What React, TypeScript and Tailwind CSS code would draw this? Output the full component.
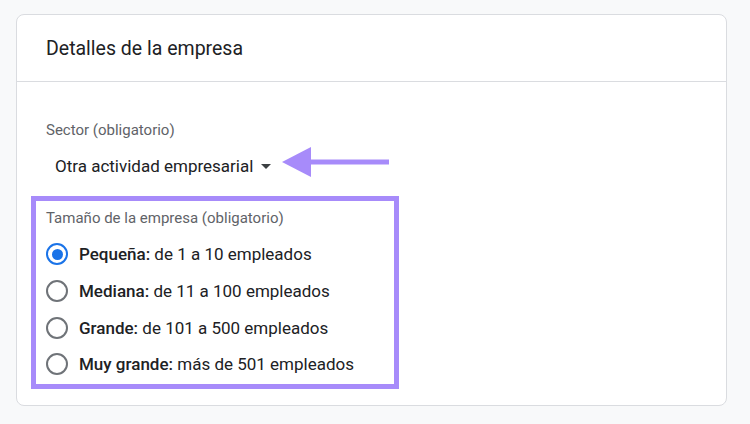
import { useState } from "react";

const sizes = [
  { id: "s", name: "Pequeña", desc: "de 1 a 10 empleados" },
  { id: "m", name: "Mediana", desc: "de 11 a 100 empleados" },
  { id: "l", name: "Grande", desc: "de 101 a 500 empleados" },
  { id: "xl", name: "Muy grande", desc: "más de 501 empleados" },
];

function Radio({ checked }: { checked: boolean }) {
  return (
    <span
      className={
        checked
          ? "flex h-[22px] w-[22px] shrink-0 items-center justify-center rounded-full border-[2.5px] border-[#1a73e8]"
          : "flex h-[22px] w-[22px] shrink-0 items-center justify-center rounded-full border-[2.5px] border-[#6f7378]"
      }
    >
      {checked && <span className="h-[11px] w-[11px] rounded-full bg-[#1a73e8]" />}
    </span>
  );
}

const App = () => {
  const [size, setSize] = useState("s");

  return (
    <div className="min-h-[424px] w-full bg-[#f8f9fa] pt-[14px] pl-[16px] font-['Roboto',sans-serif]">
      <div className="w-[711px] h-[392px] rounded-[8px] border border-[#dadce0] bg-white">
        {/* header */}
        <div className="flex h-[67px] items-center border-b border-[#dadce0] pl-[29px] pt-[1px]">
          <h2 className="text-[19.5px] leading-[24px] text-[#202124]">Detalles de la empresa</h2>
        </div>

        <div className="pl-[29px] pt-[40px]">
          <p className="text-[15px] leading-[16px] text-[#5f6368]">Sector (obligatorio)</p>

          <div className="relative mt-[16px] flex h-[24px] items-center pl-[9px]">
            <span className="text-[17px] leading-[24px] text-[#202124]">Otra actividad empresarial</span>
            <svg className="ml-[8px]" width="10" height="5" viewBox="0 0 10 5">
              <path d="M0 0 L10 0 L5 5 Z" fill="#3c4043" />
            </svg>
            {/* annotation arrow */}
            <svg
              className="absolute left-[236px] top-[-7px]"
              width="108"
              height="30"
              viewBox="0 0 108 30"
            >
              <path d="M0 15 L29 0 L29 30 Z" fill="#a78bfa" />
              <rect x="28" y="12.5" width="79" height="5" fill="#a78bfa" />
            </svg>
          </div>

          <div className="ml-[-15px] mt-[18px] w-[368px] border-[5px] border-[#a78bfa] pl-[10px] pt-[9px] pb-[1px]">
            <p className="text-[15px] leading-[16px] text-[#5f6368]">Tamaño de la empresa (obligatorio)</p>
            <div className="mt-[10px] flex flex-col">
              {sizes.map((s) => (
                <label
                  key={s.id}
                  onClick={() => setSize(s.id)}
                  className="flex h-[36.7px] cursor-pointer items-center gap-[11px]"
                >
                  <Radio checked={size === s.id} />
                  <span className="text-[17px] leading-[20px] text-[#202124]">
                    <span className="font-medium">{s.name}:</span> {s.desc}
                  </span>
                </label>
              ))}
            </div>
          </div>
        </div>
      </div>
    </div>
  );
};

export default App;
